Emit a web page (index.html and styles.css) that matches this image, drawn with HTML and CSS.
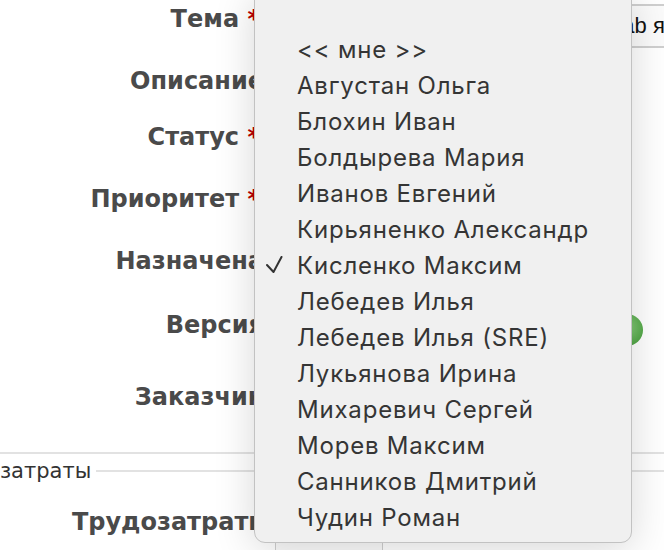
FILE: index.html
```html
<!DOCTYPE html>
<html lang="ru">
<head>
    <meta charset="UTF-8">
    <meta name="viewport" content="width=device-width, initial-scale=1.0">
    <title>Новая задача</title>
    <link rel="stylesheet" href="styles.css">
</head>
<body>
    <div class="page">
        <div class="attributes">
            <div class="row row-subject">
                <label class="is-required">Тема <span class="required">*</span></label>
                <div class="field">
                    <div class="text-input subject">GitLab ядра</div>
                </div>
            </div>
            <div class="row row-description">
                <label>Описание</label>
                <div class="field"></div>
            </div>
            <div class="row row-status">
                <label class="is-required">Статус <span class="required">*</span></label>
                <div class="field"></div>
            </div>
            <div class="row row-priority">
                <label class="is-required">Приоритет <span class="required">*</span></label>
                <div class="field"></div>
            </div>
            <div class="row row-assigned">
                <label>Назначена</label>
                <div class="field"></div>
            </div>
            <div class="row row-version">
                <label>Версия</label>
                <div class="field"><span class="add-icon"></span></div>
            </div>
            <div class="row row-customer">
                <label>Заказчик</label>
                <div class="field"></div>
            </div>
        </div>

        <fieldset class="time-entry">
            <legend>Трудозатраты</legend>
            <div class="row row-hours">
                <label>Трудозатраты</label>
                <div class="field">
                    <div class="text-input hours"></div>
                </div>
            </div>
        </fieldset>

        <!-- открытый список "Назначена" -->
        <ul class="select-menu">
            <li>&nbsp;</li>
            <li>&lt;&lt; мне &gt;&gt;</li>
            <li>Августан Ольга</li>
            <li>Блохин Иван</li>
            <li>Болдырева Мария</li>
            <li>Иванов Евгений</li>
            <li>Кирьяненко Александр</li>
            <li class="checked">
                <svg class="check" width="18" height="18" viewBox="0 0 18 18">
                    <polyline points="1,9 7.5,16 15.5,1" fill="none" stroke="#333" stroke-width="2" stroke-linecap="round" stroke-linejoin="round"/>
                </svg>
                Кисленко Максим
            </li>
            <li>Лебедев Илья</li>
            <li>Лебедев Илья (SRE)</li>
            <li>Лукьянова Ирина</li>
            <li>Михаревич Сергей</li>
            <li>Морев Максим</li>
            <li>Санников Дмитрий</li>
            <li>Чудин Роман</li>
        </ul>
    </div>
</body>
</html>
```

FILE: styles.css
```css
body {
    margin: 0;
    background-color: #fff;
    font-family: "DejaVu Sans", Verdana, sans-serif;
    overflow: hidden;
}
.page {
    position: relative;
    width: 664px;
    height: 550px;
    overflow: hidden;
}
.attributes {
    padding-top: 5px;
    height: 447px;
    border-bottom: 2px solid #e2e2e2;
}
.row {
    display: grid;
    grid-template-columns: 264px 1fr;
    column-gap: 11px;
}
.row label {
    text-align: right;
    font-weight: bold;
    font-size: 24px;
    line-height: 28px;
    color: #4a4a4a;
    white-space: nowrap;
}
.row label.is-required {
    padding-right: 4px;
}
.required {
    color: #bb0000;
}
.row-subject { height: 62px; }
.row-description { height: 56px; }
.row-status { height: 62px; }
.row-priority { height: 62px; }
.row-assigned { height: 64px; }
.row-version { height: 72px; }
.row-customer { height: 60px; }

.field {
    position: relative;
}
.text-input {
    border: 1px solid #cfcfcf;
    border-width: 2px 0 2px 1px;
    background-color: #fbfbfb;
    font-family: "Liberation Sans", Arial, sans-serif;
    font-size: 22px;
    color: #111;
    white-space: nowrap;
}
.subject {
    margin-top: -1px;
    height: 40px;
    line-height: 40px;
    padding-left: 306px;
}
.add-icon {
    position: absolute;
    left: 336px;
    top: 3px;
    width: 32px;
    height: 32px;
    border-radius: 50%;
    background: radial-gradient(circle at 45% 40%, #8fd182, #55a94a 70%, #3f8f37);
}

.time-entry {
    margin: 5px 0 0 -56px;
    padding: 0 0 0 56px;
    border: none;
    border-top: 2px solid #e2e2e2;
}
.time-entry legend {
    margin-left: -66px;
    padding: 0 5px 0 0;
    font-size: 21px;
    color: #333;
}
.row-hours {
    margin-top: 25px;
}
.row-hours label {
    margin-right: -6px;
}
.hours {
    width: 106px;
    height: 46px;
    border-width: 2px 1px 0 1px;
    margin-top: 7px;
}

.select-menu {
    position: absolute;
    left: 254px;
    top: -11px;
    width: 376px;
    margin: 0;
    padding: 6px 0;
    list-style: none;
    background-color: #f0f0f0;
    border: 1px solid #c2c2c2;
    border-radius: 11px;
    box-shadow: 0 6px 40px rgba(0, 0, 0, 0.16);
    font-family: Inter, "Noto Sans", sans-serif;
    font-size: 24px;
    letter-spacing: 0.8px;
    color: #353535;
}
.select-menu li {
    position: relative;
    height: 36px;
    line-height: 36px;
    padding-left: 42px;
    white-space: nowrap;
}
.select-menu .check {
    position: absolute;
    left: 11px;
    top: 8px;
}
```
